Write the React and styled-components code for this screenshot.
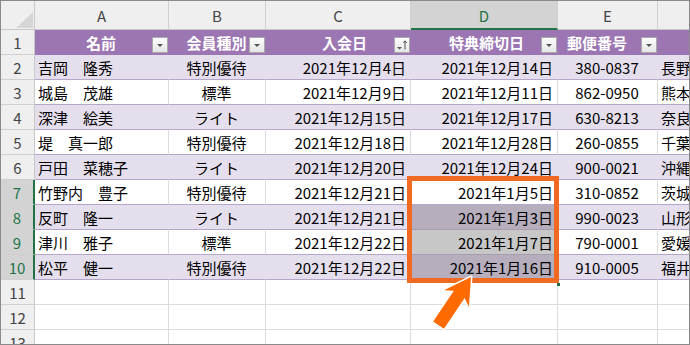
import React from "react";
import styled, { createGlobalStyle, css } from "styled-components";

const GlobalStyle = createGlobalStyle`
  html, body {
    margin: 0;
    padding: 0;
    background: #ffffff;
  }
`;

const FONT = `"Noto Sans CJK JP", "Noto Sans", sans-serif`;

const Sheet = styled.div`
  position: relative;
  width: 690px;
  height: 345px;
  box-sizing: border-box;
  border: 1px solid #8a8a8a;
  overflow: hidden;
  background: #ffffff;
  display: grid;
  grid-template-columns: 34px 134px 97px 145px 147px 100px 100px;
  grid-template-rows: 29px repeat(13, 25px);
  font-family: ${FONT};
  font-size: 15px;
  color: #000;
`;

const Corner = styled.div`
  position: relative;
  background: #efefef;
  border-right: 1px solid #c8c8c8;
  border-bottom: 1px solid #c8c8c8;
  box-sizing: border-box;

  &::after {
    content: "";
    position: absolute;
    right: 1px;
    bottom: 1px;
    width: 17px;
    height: 16px;
    background: #d6d6d6;
    clip-path: polygon(100% 0, 100% 100%, 0 100%);
  }
`;

const ColHead = styled.div`
  display: flex;
  align-items: center;
  justify-content: center;
  box-sizing: border-box;
  background: ${p => (p.$selected ? "#d3d3d3" : "#efefef")};
  color: ${p => (p.$selected ? "#217346" : "#444")};
  border-right: 1px solid #d0d0d0;
  border-bottom: ${p => (p.$selected ? "2px solid #217346" : "1px solid #c8c8c8")};
  padding-top: 1px;
`;

const RowHead = styled.div`
  display: flex;
  align-items: center;
  justify-content: center;
  box-sizing: border-box;
  background: ${p => (p.$selected ? "#d3d3d3" : "#efefef")};
  color: ${p => (p.$selected ? "#217346" : "#444")};
  border-bottom: 1px solid #d0d0d0;
  border-right: ${p => (p.$selected ? "2px solid #217346" : "1px solid #c8c8c8")};
`;

const bands = {
  head: css`
    background: #9b76b2;
    color: #ffffff;
    font-weight: bold;
    border-right: 1px solid #9b76b2;
    border-bottom: 1px solid #9b76b2;
  `,
  band: css`
    background: #e5dfed;
    border-right: 1px solid #e5dfed;
    border-bottom: 1px solid #b7a6cb;
  `,
  white: css`
    background: #ffffff;
    border-right: 1px solid #dcdcdc;
    border-bottom: 1px solid #b7a6cb;
  `,
  plain: css`
    background: #ffffff;
    border-right: 1px solid #dcdcdc;
    border-bottom: 1px solid #dcdcdc;
  `,
};

const Cell = styled.div`
  position: relative;
  display: flex;
  align-items: center;
  justify-content: ${p => p.$align || "flex-start"};
  box-sizing: border-box;
  padding: 1px 4px 0 3px;
  white-space: nowrap;
  overflow: hidden;
  ${p => bands[p.$band]}
  ${p => p.$tint && css`
    background: ${p.$tint};
    border-right-color: ${p.$tint};
    border-bottom-color: #a79cb0;
  `}
`;

const Label = styled.span`
  padding-left: ${p => Math.max(0, p.$dx * 2)}px;
  padding-right: ${p => Math.max(0, -p.$dx * 2)}px;
`;

const FilterBtn = styled.div`
  position: absolute;
  right: 0;
  bottom: 1px;
  width: 16px;
  height: 16px;
  box-sizing: border-box;
  border: 1px solid #a9a9a9;
  background: linear-gradient(#fdfdfd, #e6e6e6);
  display: flex;
  align-items: center;
  justify-content: center;
`;

const SelectBox = styled.div`
  position: absolute;
  left: 406px;
  top: 175px;
  width: 152px;
  height: 107px;
  box-sizing: border-box;
  border: 5px solid #f06a24;
  pointer-events: none;
`;

const FillHandle = styled.div`
  position: absolute;
  left: 556px;
  top: 282px;
  width: 3px;
  height: 3px;
  background: #217346;
`;

const Overlay = styled.svg`
  position: absolute;
  left: -1px;
  top: -1px;
  pointer-events: none;
`;

const DropIcon = ({ sorted }) => (
  <svg width="12" height="12" viewBox="0 0 12 12">
    {sorted ? (
      <>
        <path d="M1 8 L6 8 L3.5 10.5 Z" fill="#555" />
        <path d="M9 10.5 V2" stroke="#555" strokeWidth="1" />
        <path d="M7.3 4 L9 1.8 L10.7 4" stroke="#555" strokeWidth="1" fill="none" />
      </>
    ) : (
      <path d="M3 5 L9 5 L6 8 Z" fill="#555" />
    )}
  </svg>
);

// F only peeks in at the right edge, so its letter and header stay blank
const columns = ["A", "B", "C", "D", "E", ""];
const aligns = ["flex-start", "center", "flex-end", "flex-end", "center", "flex-start"];
const headers = [
  { text: "名前", dx: 0 },
  { text: "会員種別", dx: 0 },
  { text: "入会日", dx: 7, sorted: true },
  { text: "特典締切日", dx: 3 },
  { text: "郵便番号", dx: -10 },
  { text: "", dx: 0, none: true },
];

const rows = [
  ["吉岡　隆秀", "特別優待", "2021年12月4日", "2021年12月14日", "380-0837", "長野"],
  ["城島　茂雄", "標準", "2021年12月9日", "2021年12月11日", "862-0950", "熊本"],
  ["深津　絵美", "ライト", "2021年12月15日", "2021年12月17日", "630-8213", "奈良"],
  ["堤　真一郎", "特別優待", "2021年12月18日", "2021年12月28日", "260-0855", "千葉"],
  ["戸田　菜穂子", "ライト", "2021年12月20日", "2021年12月24日", "900-0021", "沖縄"],
  ["竹野内　豊子", "特別優待", "2021年12月21日", "2021年1月5日", "310-0852", "茨城"],
  ["反町　隆一", "ライト", "2021年12月21日", "2021年1月3日", "990-0023", "山形"],
  ["津川　雅子", "標準", "2021年12月22日", "2021年1月7日", "790-0001", "愛媛"],
  ["松平　健一", "特別優待", "2021年12月22日", "2021年1月16日", "910-0005", "福井"],
];

const tintFor = (rowNo, col) => {
  if (col !== 3 || rowNo < 8 || rowNo > 10) return null;
  return rowNo % 2 === 0 ? "#b6aebd" : "#c7c7c7";
};

export default function App() {
  return (
    <>
      <GlobalStyle />
      <Sheet>
        <Corner />
        {columns.map((c, i) => (
          <ColHead key={i} $selected={c === "D"}>{c}</ColHead>
        ))}

        <RowHead>1</RowHead>
        {headers.map((h, i) => (
          <Cell key={i} $band="head" $align="center">
            <Label $dx={h.dx}>{h.text}</Label>
            {!h.none && (
              <FilterBtn>
                <DropIcon sorted={h.sorted} />
              </FilterBtn>
            )}
          </Cell>
        ))}

        {rows.map((r, ri) => {
          const rowNo = ri + 2;
          const band = rowNo % 2 === 0 ? "band" : "white";
          return (
            <React.Fragment key={rowNo}>
              <RowHead $selected={rowNo >= 7 && rowNo <= 10}>{rowNo}</RowHead>
              {r.map((v, ci) => (
                <Cell key={ci} $band={band} $align={aligns[ci]} $tint={tintFor(rowNo, ci)}>
                  {v}
                </Cell>
              ))}
            </React.Fragment>
          );
        })}

        {[11, 12, 13].map(n => (
          <React.Fragment key={n}>
            <RowHead>{n}</RowHead>
            {columns.map((c, i) => (
              <Cell key={i} $band="plain" />
            ))}
          </React.Fragment>
        ))}

        <SelectBox />
        <FillHandle />
        <Overlay width="690" height="345" viewBox="0 0 690 345">
          <g transform="translate(471 277) rotate(34)">
            <polygon
              points="0,0 15,26 6.5,21 6.5,58 -6.5,58 -6.5,21 -15,26"
              fill="#ff6a00"
              stroke="#ffffff"
              strokeWidth="3"
              strokeLinejoin="round"
              paintOrder="stroke"
            />
          </g>
        </Overlay>
      </Sheet>
    </>
  );
}
